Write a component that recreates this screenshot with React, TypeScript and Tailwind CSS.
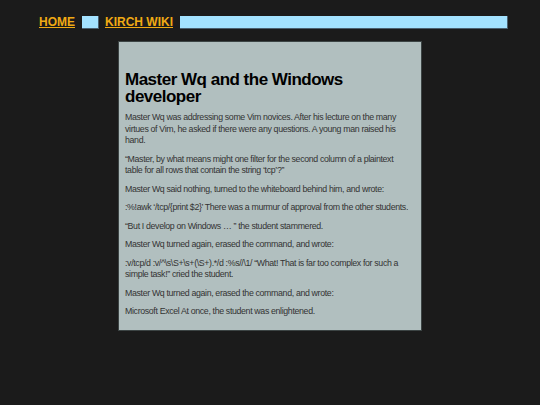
export default function App() {
  const paras = [
    "Master Wq was addressing some Vim novices. After his lecture on the many virtues of Vim, he asked if there were any questions. A young man raised his hand.",
    "\u201cMaster, by what means might one filter for the second column of a plaintext table for all rows that contain the string \u2018tcp\u2019?\u201d",
    "Master Wq said nothing, turned to the whiteboard behind him, and wrote:",
    ":%!awk \u2018/tcp/{print $2}\u2019 There was a murmur of approval from the other students.",
    "\u201cBut I develop on Windows \u2026 \u201d the student stammered.",
    "Master Wq turned again, erased the command, and wrote:",
    ":v/tcp/d :v/^\\s\\S+\\s+(\\S+).*/d :%s//\\1/ \u201cWhat! That is far too complex for such a simple task!\u201d cried the student.",
    "Master Wq turned again, erased the command, and wrote:",
    "Microsoft Excel At once, the student was enlightened.",
  ]

  return (
    <div className="min-h-[405px] bg-[#1b1b1b] pt-4 font-['Liberation_Sans',Arial,sans-serif]">
      <nav className="ml-[39px] flex h-[13px] w-[469px] items-stretch gap-[6.5px]">
        <a href="#" className="text-[12px] font-bold leading-[13px] text-[#f0aa14] underline">
          HOME
        </a>
        <span className="w-[17px] border-b border-r border-[#4a6070] bg-[#a3e2ff]" />
        <a href="#" className="text-[12px] font-bold leading-[13px] text-[#f0aa14] underline">
          KIRCH WIKI
        </a>
        <span className="flex-1 border-b border-r border-[#4a6070] bg-[#a3e2ff]" />
      </nav>

      <main className="mx-auto mt-3 w-[304px] border border-[#3c4444] bg-[#b1bfbf] pb-[12px] pl-[6px] pr-[9px] pt-[30px]">
        <h1 className="mb-[7px] text-[17px] font-bold leading-[16.5px] tracking-[-0.5px] text-black">
          Master Wq and the Windows developer
        </h1>
        {paras.map((p, i) => (
          <p key={i} className="mt-[7px] text-[8.8px] leading-[11.5px] tracking-[-0.35px] text-[#333]">
            {p}
          </p>
        ))}
      </main>
    </div>
  )
}
